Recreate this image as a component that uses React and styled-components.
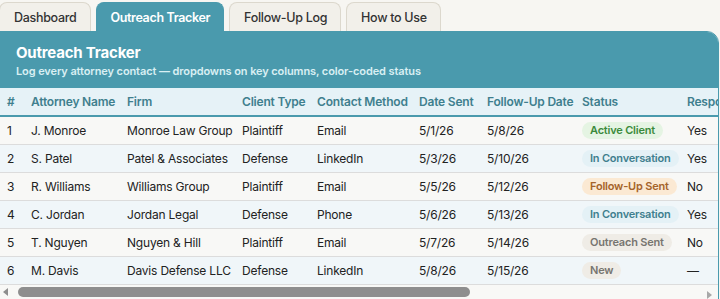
import styled, { createGlobalStyle } from "styled-components"

const GlobalStyle = createGlobalStyle`
   html, body {
      margin: 0;
      background: #f7f6f2;
      font-family: Inter, "Noto Sans", sans-serif;
      overflow: hidden;
   }
`;

const Page = styled.div`
   padding: 2px 1px 0 0;
   margin-left: -2px;
`;

const Tabs = styled.div`
   display: flex;
   gap: 5px;
   padding-left: 1px;
`;

const Tab = styled.div`
   height: 29px;
   box-sizing: border-box;
   padding: 0 13px 0 14px;
   display: flex;
   align-items: center;
   border: 1px solid ${p => (p.$active ? "#4a9aad" : "#dcd8cd")};
   border-bottom: none;
   border-radius: 8px 8px 0 0;
   background: ${p => (p.$active ? "#4a9aad" : "#f2f0ea")};
   color: ${p => (p.$active ? "#ffffff" : "#333333")};
   font-size: 12.5px;
   font-weight: ${p => (p.$active ? 600 : 500)};
   letter-spacing: ${p => (p.$active ? "-0.35px" : "-0.3px")};
`;

const Card = styled.div`
   border: 1px solid #4a9aad;
   border-radius: 0 12px 12px 12px;
   background: #f8f8f6;
   overflow: hidden;
   padding-bottom: 20px;
`;

const CardHeader = styled.div`
   background: #4a9aad;
   height: 56px;
   box-sizing: border-box;
   padding: 11px 17px 0;
   color: #fff;
`;

const Title = styled.h2`
   margin: 0;
   font-size: 15px;
   font-weight: 700;
   letter-spacing: -0.2px;
   line-height: 20px;
`;

const Subtitle = styled.div`
   font-size: 11px;
   font-weight: 600;
   color: #d9eff3;
   line-height: 16px;
   letter-spacing: -0.1px;
`;

const Scroller = styled.div`
   overflow: hidden;
`;

const ScrollBar = styled.div`
   display: flex;
   align-items: center;
   height: 14px;
   padding: 0 4px;
`;

const Arrow = styled.span`
   flex: none;
   width: 0;
   height: 0;
   border-top: 4px solid transparent;
   border-bottom: 4px solid transparent;
   ${p => (p.$dir === "left"
      ? "border-right: 5px solid #8e8e8e; margin-right: 10px;"
      : "border-left: 5px solid #a8a8a8; margin-left: auto; margin-right: 2px; margin-top: 6px;")}
`;

const Thumb = styled.div`
   flex: none;
   height: 10px;
   border-radius: 5px;
   background: #8e8e8e;
`;

const Table = styled.table`
   border-collapse: collapse;
   table-layout: fixed;
   width: 1096px;
   font-size: 12px;
   letter-spacing: -0.2px;
`;

const Th = styled.th`
   height: 27px;
   padding: 0 8px;
   text-align: left;
   font-weight: 600;
   color: #3f7f8e;
   background: #e6f2f7;
   border-bottom: 2px solid #4a9aad;
   white-space: nowrap;
   overflow: hidden;
`;

const Row = styled.tr`
   background: ${p => (p.$alt ? "#f0f6f9" : "#f8f8f6")};
`;

const Td = styled.td`
   height: 27px;
   padding: 0 8px;
   color: #222;
   border-bottom: 1px solid #dcdcdc;
   white-space: nowrap;
   overflow: hidden;
`;

const badgeColors = {
   "Active Client": ["#e5f4e3", "#3b8a3b"],
   "In Conversation": ["#e4f1f6", "#3f7f8e"],
   "Follow-Up Sent": ["#fbe9d3", "#a5632a"],
   "Outreach Sent": ["#efece6", "#777570"],
   "New": ["#efece6", "#777570"],
};

const Badge = styled.span`
   display: inline-block;
   padding: 0 8px;
   height: 17px;
   line-height: 17px;
   border-radius: 9px;
   font-size: 11px;
   font-weight: 600;
   letter-spacing: -0.2px;
   background: ${p => p.$bg};
   color: ${p => p.$fg};
`;

const columns = [
   ["#", 24],
   ["Attorney Name", 96],
   ["Firm", 115],
   ["Client Type", 75],
   ["Contact Method", 102],
   ["Date Sent", 68],
   ["Follow-Up Date", 95],
   ["Status", 105],
   ["Response", 86],
   ["Next Step", 140],
   ["Notes", 190],
];

const rows = [
   ["1", "J. Monroe", "Monroe Law Group", "Plaintiff", "Email", "5/1/26", "5/8/26", "Active Client", "Yes", "Onboard", "Signed retainer"],
   ["2", "S. Patel", "Patel & Associates", "Defense", "LinkedIn", "5/3/26", "5/10/26", "In Conversation", "Yes", "Send deck", "Interested in demo"],
   ["3", "R. Williams", "Williams Group", "Plaintiff", "Email", "5/5/26", "5/12/26", "Follow-Up Sent", "No", "Call", "No reply yet"],
   ["4", "C. Jordan", "Jordan Legal", "Defense", "Phone", "5/6/26", "5/13/26", "In Conversation", "Yes", "Schedule call", "Asked for pricing"],
   ["5", "T. Nguyen", "Nguyen & Hill", "Plaintiff", "Email", "5/7/26", "5/14/26", "Outreach Sent", "No", "Follow up", "—"],
   ["6", "M. Davis", "Davis Defense LLC", "Defense", "LinkedIn", "5/8/26", "5/15/26", "New", "—", "Intro message", "—"],
];

// visible width / content width decides the thumb length
const viewWidth = 718;
const contentWidth = columns.reduce((s, c) => s + c[1], 0);
const trackWidth = 690;

export default function App() {
   return (
      <Page>
         <GlobalStyle />
         <Tabs>
            <Tab>Dashboard</Tab>
            <Tab $active>Outreach Tracker</Tab>
            <Tab>Follow-Up Log</Tab>
            <Tab>How to Use</Tab>
         </Tabs>
         <Card>
            <CardHeader>
               <Title>Outreach Tracker</Title>
               <Subtitle>Log every attorney contact — dropdowns on key columns, color-coded status</Subtitle>
            </CardHeader>
            <Scroller>
               <Table>
                  <colgroup>
                     {columns.map(([name, w]) => <col key={name} style={{ width: w }} />)}
                  </colgroup>
                  <thead>
                     <tr>
                        {columns.map(([name]) => <Th key={name}>{name}</Th>)}
                     </tr>
                  </thead>
                  <tbody>
                     {rows.map((r, i) => (
                        <Row key={r[0]} $alt={i % 2 === 1}>
                           {r.map((cell, j) => (
                              <Td key={j}>
                                 {j === 7 ? (
                                    <Badge $bg={badgeColors[cell][0]} $fg={badgeColors[cell][1]}>{cell}</Badge>
                                 ) : cell}
                              </Td>
                           ))}
                        </Row>
                     ))}
                  </tbody>
               </Table>
            </Scroller>
            <ScrollBar>
               <Arrow $dir="left" />
               <Thumb style={{ width: Math.round(trackWidth * viewWidth / contentWidth) }} />
               <Arrow $dir="right" />
            </ScrollBar>
         </Card>
      </Page>
   )
}
